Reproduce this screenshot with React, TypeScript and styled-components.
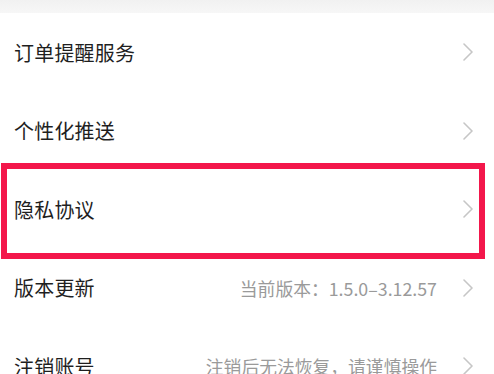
import styled, {createGlobalStyle} from "styled-components";

const GlobalStyle = createGlobalStyle`
    html, body {
        margin: 0;
        padding: 0;
        background: #ffffff;
    }
    body {
        font-family: "Noto Sans CJK SC", "Noto Sans", sans-serif;
    }
`

const Page = styled.div`
    width: 494px;
    height: 374px;
    overflow: hidden;
    background: #ffffff;
`

const TopBand = styled.div`
    height: 13px;
    background: linear-gradient(#f1f1f1, #f7f7f7);
`

const List = styled.div`
    display: flex;
    flex-direction: column;
`

const Row = styled.div<{ $highlight?: boolean }>`
    position: relative;
    height: 78.5px;
    display: flex;
    align-items: center;
    padding: 0 21px 0 14px;

    ${p => p.$highlight && `
        &::after {
            content: "";
            position: absolute;
            top: -7px;
            bottom: -10px;
            left: 1px;
            right: 9px;
            border: 6px solid #f3174b;
            pointer-events: none;
        }
    `}
`

const Title = styled.div`
    font-size: 20px;
    color: #1f1f1f;
    letter-spacing: 0.2px;
    flex: 1;
`

const Note = styled.div`
    font-size: 17.8px;
    color: #9a9a9a;
    margin-right: 26px;
`

const Chevron = () => (
    <svg width="10" height="18" viewBox="0 0 10 18">
        <polyline points="1,1 9,9 1,17" fill="none" stroke="#c6c6c6" strokeWidth="1.6"
                  strokeLinecap="round" strokeLinejoin="round"/>
    </svg>
)

type Item = {
    title: string,
    note?: string,
    highlight?: boolean,
}

const items: Item[] = [
    {title: "订单提醒服务"},
    {title: "个性化推送"},
    {title: "隐私协议", highlight: true},
    {title: "版本更新", note: "当前版本：1.5.0–3.12.57"},
    {title: "注销账号", note: "注销后无法恢复，请谨慎操作"},
]

export default function App() {
    return (
        <Page>
            <GlobalStyle/>
            <TopBand/>
            <List>
                {items.map(i =>
                    <Row key={i.title} $highlight={i.highlight}>
                        <Title>{i.title}</Title>
                        {i.note && <Note>{i.note}</Note>}
                        <Chevron/>
                    </Row>
                )}
            </List>
        </Page>
    )
}
